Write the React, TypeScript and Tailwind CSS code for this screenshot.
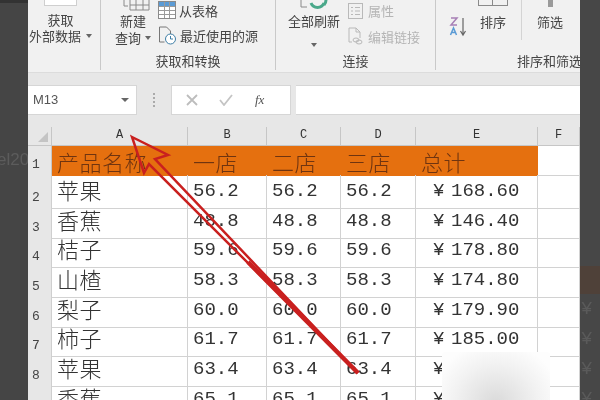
const cjk = "font-['Noto_Sans_CJK_SC',sans-serif]";
const mono = "font-['Liberation_Mono',monospace]";

const rows = [
  ["苹果", "56.2", "168.60"],
  ["香蕉", "48.8", "146.40"],
  ["桔子", "59.6", "178.80"],
  ["山楂", "58.3", "174.80"],
  ["梨子", "60.0", "179.90"],
  ["柿子", "61.7", "185.00"],
  ["苹果", "63.4", "190.20"],
  ["香蕉", "65.1", "195.30"],
];

function Caret() {
  return <span className="inline-block w-0 h-0 border-x-[3px] border-x-transparent border-t-[4px] border-t-[#666]" />;
}

function TableIcon() {
  return (
    <svg width="18" height="18" viewBox="0 0 18 18" fill="none">
      <rect x="0.5" y="0.5" width="17" height="17" fill="#fff" stroke="#8a8a8a" />
      <rect x="1" y="1" width="16" height="4" fill="#5b9bd5" />
      <path d="M6.5 1v16M11.5 1v16M1 5.5h16M1 9.5h16M1 13.5h16" stroke="#9a9a9a" />
    </svg>
  );
}

function RecentIcon() {
  return (
    <svg width="19" height="19" viewBox="0 0 19 19" fill="none">
      <path d="M1.5 1h7l4 4v3M1.5 1v15h5" stroke="#777" />
      <circle cx="12.5" cy="13" r="5" fill="#fff" stroke="#3d7ea6" />
      <path d="M12.5 10v3h2.5" stroke="#3d7ea6" />
    </svg>
  );
}

function PropIcon() {
  return (
    <svg width="15" height="16" viewBox="0 0 15 16" fill="none" stroke="#b9b9b9">
      <rect x="0.5" y="0.5" width="14" height="15" />
      <path d="M3 4.5h2M7 4.5h5M3 8h2M7 8h5M3 11.5h2M7 11.5h5" />
    </svg>
  );
}

function LinkIcon() {
  return (
    <svg width="15" height="18" viewBox="0 0 15 18" fill="none" stroke="#b9b9b9">
      <path d="M1 12V1h7l4 4v6M8 1v4h4M1 12v3h3" />
      <ellipse cx="8" cy="13" rx="3" ry="2" />
      <ellipse cx="11" cy="15" rx="3" ry="2" />
    </svg>
  );
}

function RibbonGroup({ width, label, labelClass = "text-center", border = true, children }: { width: string; label: string; labelClass?: string; border?: boolean; children: React.ReactNode }) {
  return (
    <div className={`${width} h-[70px] shrink-0 flex flex-col ${border ? "border-r border-[#c9c9c9]" : ""}`}>
      <div className="h-[52px] flex overflow-hidden">{children}</div>
      <div className={`h-[18px] leading-[18px] text-[13px] text-[#444] whitespace-nowrap overflow-hidden ${labelClass}`}>{label}</div>
    </div>
  );
}

function Ribbon() {
  return (
    <div className={`h-[73px] shrink-0 bg-[#f1f1f1] border-b border-[#dcdcdc] text-[13px] leading-[17px] text-[#444] ${cjk}`}>
      <div className="flex">
        <RibbonGroup width="w-[73px]" label="">
          <div className="w-full flex flex-col items-center pr-[7px]">
            <div className="w-[33px] h-[6px] bg-white border border-t-0 border-[#cfcfcf] mb-[5px] shrink-0" />
            <span>获取</span>
            <span className="whitespace-nowrap flex items-center gap-[5px] -mt-[1px]">外部数据 <Caret /></span>
          </div>
        </RibbonGroup>
        <RibbonGroup width="w-[175px]" label="获取和转换">
          <div className="w-[57px] flex flex-col items-center pl-[7px]">
            <svg width="27" height="11" viewBox="0 0 27 11" fill="none" stroke="#8a8a8a" className="ml-[6px]">
              <path d="M1 0v6h4M7 0v10h19V0M7 5h19M13 0v10M20 0v10" />
            </svg>
            <span className="mt-[1px]">新建</span>
            <span className="whitespace-nowrap flex items-center gap-[4px]">查询 <Caret /></span>
          </div>
          <div className="flex flex-col pt-[1px] gap-[7px]">
            <div className="flex items-center gap-[3px] whitespace-nowrap"><TableIcon />从表格</div>
            <div className="flex items-center gap-[3px] whitespace-nowrap"><RecentIcon />最近使用的源</div>
          </div>
        </RibbonGroup>
        <RibbonGroup width="w-[160px]" label="连接">
          <div className="w-[70px] flex flex-col items-center pl-[6px]">
            <svg width="30" height="12" viewBox="0 0 30 12" fill="none" className="shrink-0">
              <path d="M2 0v7h6" stroke="#8a8a8a" />
              <path d="M12 3a7 7 0 0 0 13 0M27 0a7 7 0 0 1-2 5" stroke="#4aa88a" strokeWidth="3" />
            </svg>
            <span className="whitespace-nowrap">全部刷新</span>
            <span className="mt-[4px]"><Caret /></span>
          </div>
          <div className="flex flex-col pl-[2px] pt-[2px] gap-[8px] text-[#b5b5b5]">
            <div className="flex items-center gap-[5px] whitespace-nowrap"><PropIcon />属性</div>
            <div className="flex items-center gap-[5px] whitespace-nowrap"><LinkIcon />编辑链接</div>
          </div>
        </RibbonGroup>
        <RibbonGroup width="w-[144px]" label="排序和筛选" labelClass="pl-[81px]" border={false}>
          <div className="w-[32px] pt-[17px] pl-[13px] shrink-0">
            <svg width="18" height="20" viewBox="0 0 18 20" fill="none">
              <path d="M2 1h6L2 8h6" stroke="#a77fb5" strokeWidth="1.5" />
              <path d="M1.500 18l3-7 3 7M2.500 15.500h4" stroke="#5b9bd5" strokeWidth="1.500" />
              <path d="M14 1v16M11.500 14l2.500 4 2.500-4" stroke="#666" strokeWidth="1.200" />
            </svg>
          </div>
          <div className="w-[50px] flex flex-col items-center shrink-0">
            <div className="flex h-[6px]">
              <span className="w-[15px] h-[6px] border border-t-0 border-[#8a8a8a]" />
              <span className="w-[15px] h-[6px] border border-t-0 border-l-0 border-[#8a8a8a]" />
            </div>
            <span className="mt-[7px]">排序</span>
          </div>
          <div className="w-[1px] h-[40px] bg-[#d4d4d4] ml-[3px] shrink-0" />
          <div className="flex flex-col items-center w-[56px] shrink-0">
            <div className="w-[5px] h-[7px] bg-[#9a9a9a]" />
            <span className="mt-[6px]">筛选</span>
          </div>
        </RibbonGroup>
      </div>
    </div>
  );
}

function FormulaBar() {
  return (
    <div className="h-[53px] shrink-0 bg-[#e7e7e7] pt-[12px]">
      <div className="h-[30px] flex items-stretch">
        <div className="w-[109px] bg-white border-y border-r border-[#d6d6d6] flex items-center justify-between pl-[5px] pr-[7px] font-['Liberation_Sans',sans-serif] text-[13px] text-[#555]">
          M13
          <span className="inline-block w-0 h-0 border-x-[4px] border-x-transparent border-t-[4px] border-t-[#666]" />
        </div>
        <div className="w-[34px] flex flex-col items-center justify-center gap-[2px]">
          <span className="w-[2px] h-[2px] bg-[#aaa]" />
          <span className="w-[2px] h-[2px] bg-[#aaa]" />
          <span className="w-[2px] h-[2px] bg-[#aaa]" />
          <span className="w-[2px] h-[2px] bg-[#aaa]" />
        </div>
        <div className="w-[120px] bg-white border border-[#d6d6d6] flex items-center pl-[14px]">
          <svg width="12" height="12" viewBox="0 0 12 12" stroke="#bdbdbd" strokeWidth="1.800"><path d="M1 1l10 10M11 1L1 11" /></svg>
          <svg width="14" height="12" viewBox="0 0 14 12" fill="none" stroke="#c4c4c4" strokeWidth="1.800" className="ml-[21px]"><path d="M1 6l4 5 8-10" /></svg>
          <span className="ml-[22px] font-['Liberation_Serif',serif] italic text-[13px] text-[#555]">fx</span>
        </div>
        <div className="w-[5px]" />
        <div className="flex-1 bg-white border-y border-[#d6d6d6]" />
      </div>
    </div>
  );
}

const gridCols = "grid grid-cols-[24px_136px_79px_74px_75px_122px_1fr]";
const cellLine = "border-r border-b border-[#d2d2d2]";

function Sheet() {
  const head = ["A", "B", "C", "D", "E", "F"];
  const title = ["产品名称", "一店", "二店", "三店", "总计"];
  return (
    <div className="flex-1 bg-white overflow-hidden">
      <div className={`${gridCols} h-[19px] bg-[#e7e7e7] pt-[1px]`}>
        <div className="border-r border-[#c6c6c6] relative">
          <span className="absolute left-[10px] top-[5px] w-0 h-0 border-l-[10px] border-l-transparent border-b-[10px] border-b-[#c4c4c4]" />
        </div>
        {head.map((c) => (
          <div key={c} className={`border-r border-[#c6c6c6] text-center text-[12px] leading-[17px] text-[#333] ${mono}`}>{c}</div>
        ))}
      </div>
      <div className={`${gridCols} h-[30px] border-t border-[#c6c6c6]`}>
        <div className="bg-[#e7e7e7] border-r border-b border-[#c6c6c6] flex items-end pl-[4px] pb-[2px] font-['Liberation_Mono',monospace] text-[13px] leading-[16px] text-[#444]">1</div>
        {title.map((t) => (
          <div key={t} className={`bg-[#e5700f] pl-[5px] text-[22px] leading-[30px] tracking-[0.5px] font-light text-[#6f3410] whitespace-nowrap ${cjk}`}>{t}</div>
        ))}
        <div className={cellLine} />
      </div>
      {rows.map((r, i) => (
        <div key={i} className={`${gridCols} h-[29.7px]`}>
          <div className={`bg-[#e7e7e7] border-r border-b border-[#cfcfcf] flex items-end pl-[4px] pb-[2px] text-[13px] leading-[16px] text-[#444] ${mono}`}>{i + 2}</div>
          <div className={`${cellLine} pl-[5px] text-[22px] leading-[28px] tracking-[0.5px] font-light text-[#333] ${cjk}`}>{r[0]}</div>
          {[0, 1, 2].map((k) => (
            <div key={k} className={`${cellLine} pl-[5px] text-[19px] leading-[33px] text-[#333] whitespace-nowrap ${mono}`}>{r[1]}</div>
          ))}
          <div className={`${cellLine} pl-[17px] text-[19px] leading-[33px] text-[#333] whitespace-nowrap ${mono}`}>
            <span className="inline-block w-[18px]">¥</span>{r[2]}
          </div>
          <div className={cellLine} />
        </div>
      ))}
    </div>
  );
}

export default function App() {
  return (
    <div className={`relative w-[600px] h-[400px] flex overflow-hidden bg-[#444] blur-[0.4px] ${cjk}`}>
      <aside className="w-[28px] shrink-0 bg-[#454545] border-t-[3px] border-[#333] pt-[144px] overflow-hidden">
        <div className="text-[17px] text-[#5c5c5c] font-['Liberation_Sans',sans-serif] -ml-[3px] whitespace-nowrap">el20</div>
      </aside>
      <main className="w-[552px] shrink-0 flex flex-col">
        <Ribbon />
        <FormulaBar />
        <Sheet />
      </main>
      <aside className="w-[20px] shrink-0 bg-[#474747] pt-[266px] overflow-hidden">
        <div className="h-[28px] bg-[#4f4139]" />
        {[0, 1, 2, 3].map((i) => (
          <div key={i} className={`h-[30px] leading-[30px] text-[19px] text-[#5a5a5a] pl-[1px] ${mono}`}>¥</div>
        ))}
      </aside>

      {/* red arrow drawn over the sheet */}
      <svg className="absolute left-0 top-0 pointer-events-none" width="600" height="400" viewBox="0 0 600 400" fill="none">
        <path d="M132 137L168 155L155 159L358 373L149 164L144 173Z" stroke="#c9201f" strokeWidth="2.500" strokeLinejoin="miter" />
        <path d="M248 262L358 373" stroke="#c9201f" strokeWidth="4.500" />
      </svg>

      {/* blurred watermark patch */}
      <div className="absolute left-[442px] top-[352px] w-[108px] h-[60px] rounded-[3px] bg-[radial-gradient(ellipse_at_50%_85%,#dadada,#f2f2f2_55%,#fdfdfd_85%)]" />
    </div>
  );
}
